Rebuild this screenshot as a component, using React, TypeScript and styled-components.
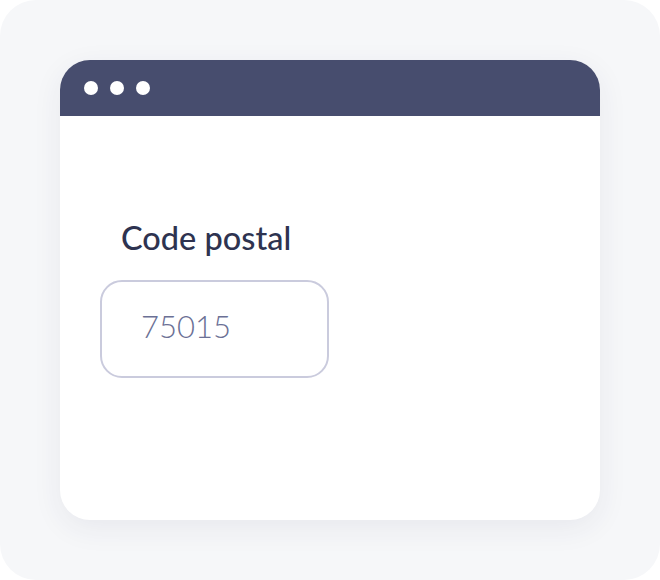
import styled, { createGlobalStyle } from "styled-components";

const GlobalStyle = createGlobalStyle`
    body {
        margin: 0;
        background: #ffffff;
        font-family: Lato, "Noto Sans", sans-serif;
    }
`;

const Frame = styled.div`
    width: 660px;
    height: 580px;
    box-sizing: border-box;
    padding: 60px;
    background: #f6f7f9;
    border-radius: 36px;
`;

const BrowserWindow = styled.div`
    height: 460px;
    display: flex;
    flex-direction: column;
    background: #ffffff;
    border-radius: 30px;
    overflow: hidden;
    box-shadow: 0 8px 30px rgba(40, 45, 80, 0.07);
`;

const TitleBar = styled.div`
    height: 56px;
    flex-shrink: 0;
    display: flex;
    align-items: center;
    gap: 12px;
    padding-left: 24px;
    background: #474d6e;
`;

const Dot = styled.span`
    width: 14px;
    height: 14px;
    border-radius: 50%;
    background: #ffffff;
`;

const Content = styled.div`
    display: flex;
    flex-direction: column;
    align-items: flex-start;
    padding: 102px 40px 0;
`;

const Label = styled.label`
    margin-left: 21px;
    font-size: 32.5px;
    font-weight: 500;
    line-height: 40px;
    color: #2e3350;
`;

const Input = styled.div`
    margin-top: 22px;
    width: 229px;
    height: 98px;
    box-sizing: border-box;
    display: flex;
    align-items: center;
    padding: 0 0 6px 39px;
    border: 2px solid #cacbdd;
    border-radius: 22px;
    font-size: 31px;
    font-weight: 300;
    color: #6b7095;
`;

export default function App() {
    return (
        <>
            <GlobalStyle />
            <Frame>
                <BrowserWindow>
                    <TitleBar>
                        <Dot />
                        <Dot />
                        <Dot />
                    </TitleBar>
                    <Content>
                        <Label>Code postal</Label>
                        <Input>75015</Input>
                    </Content>
                </BrowserWindow>
            </Frame>
        </>
    );
}
